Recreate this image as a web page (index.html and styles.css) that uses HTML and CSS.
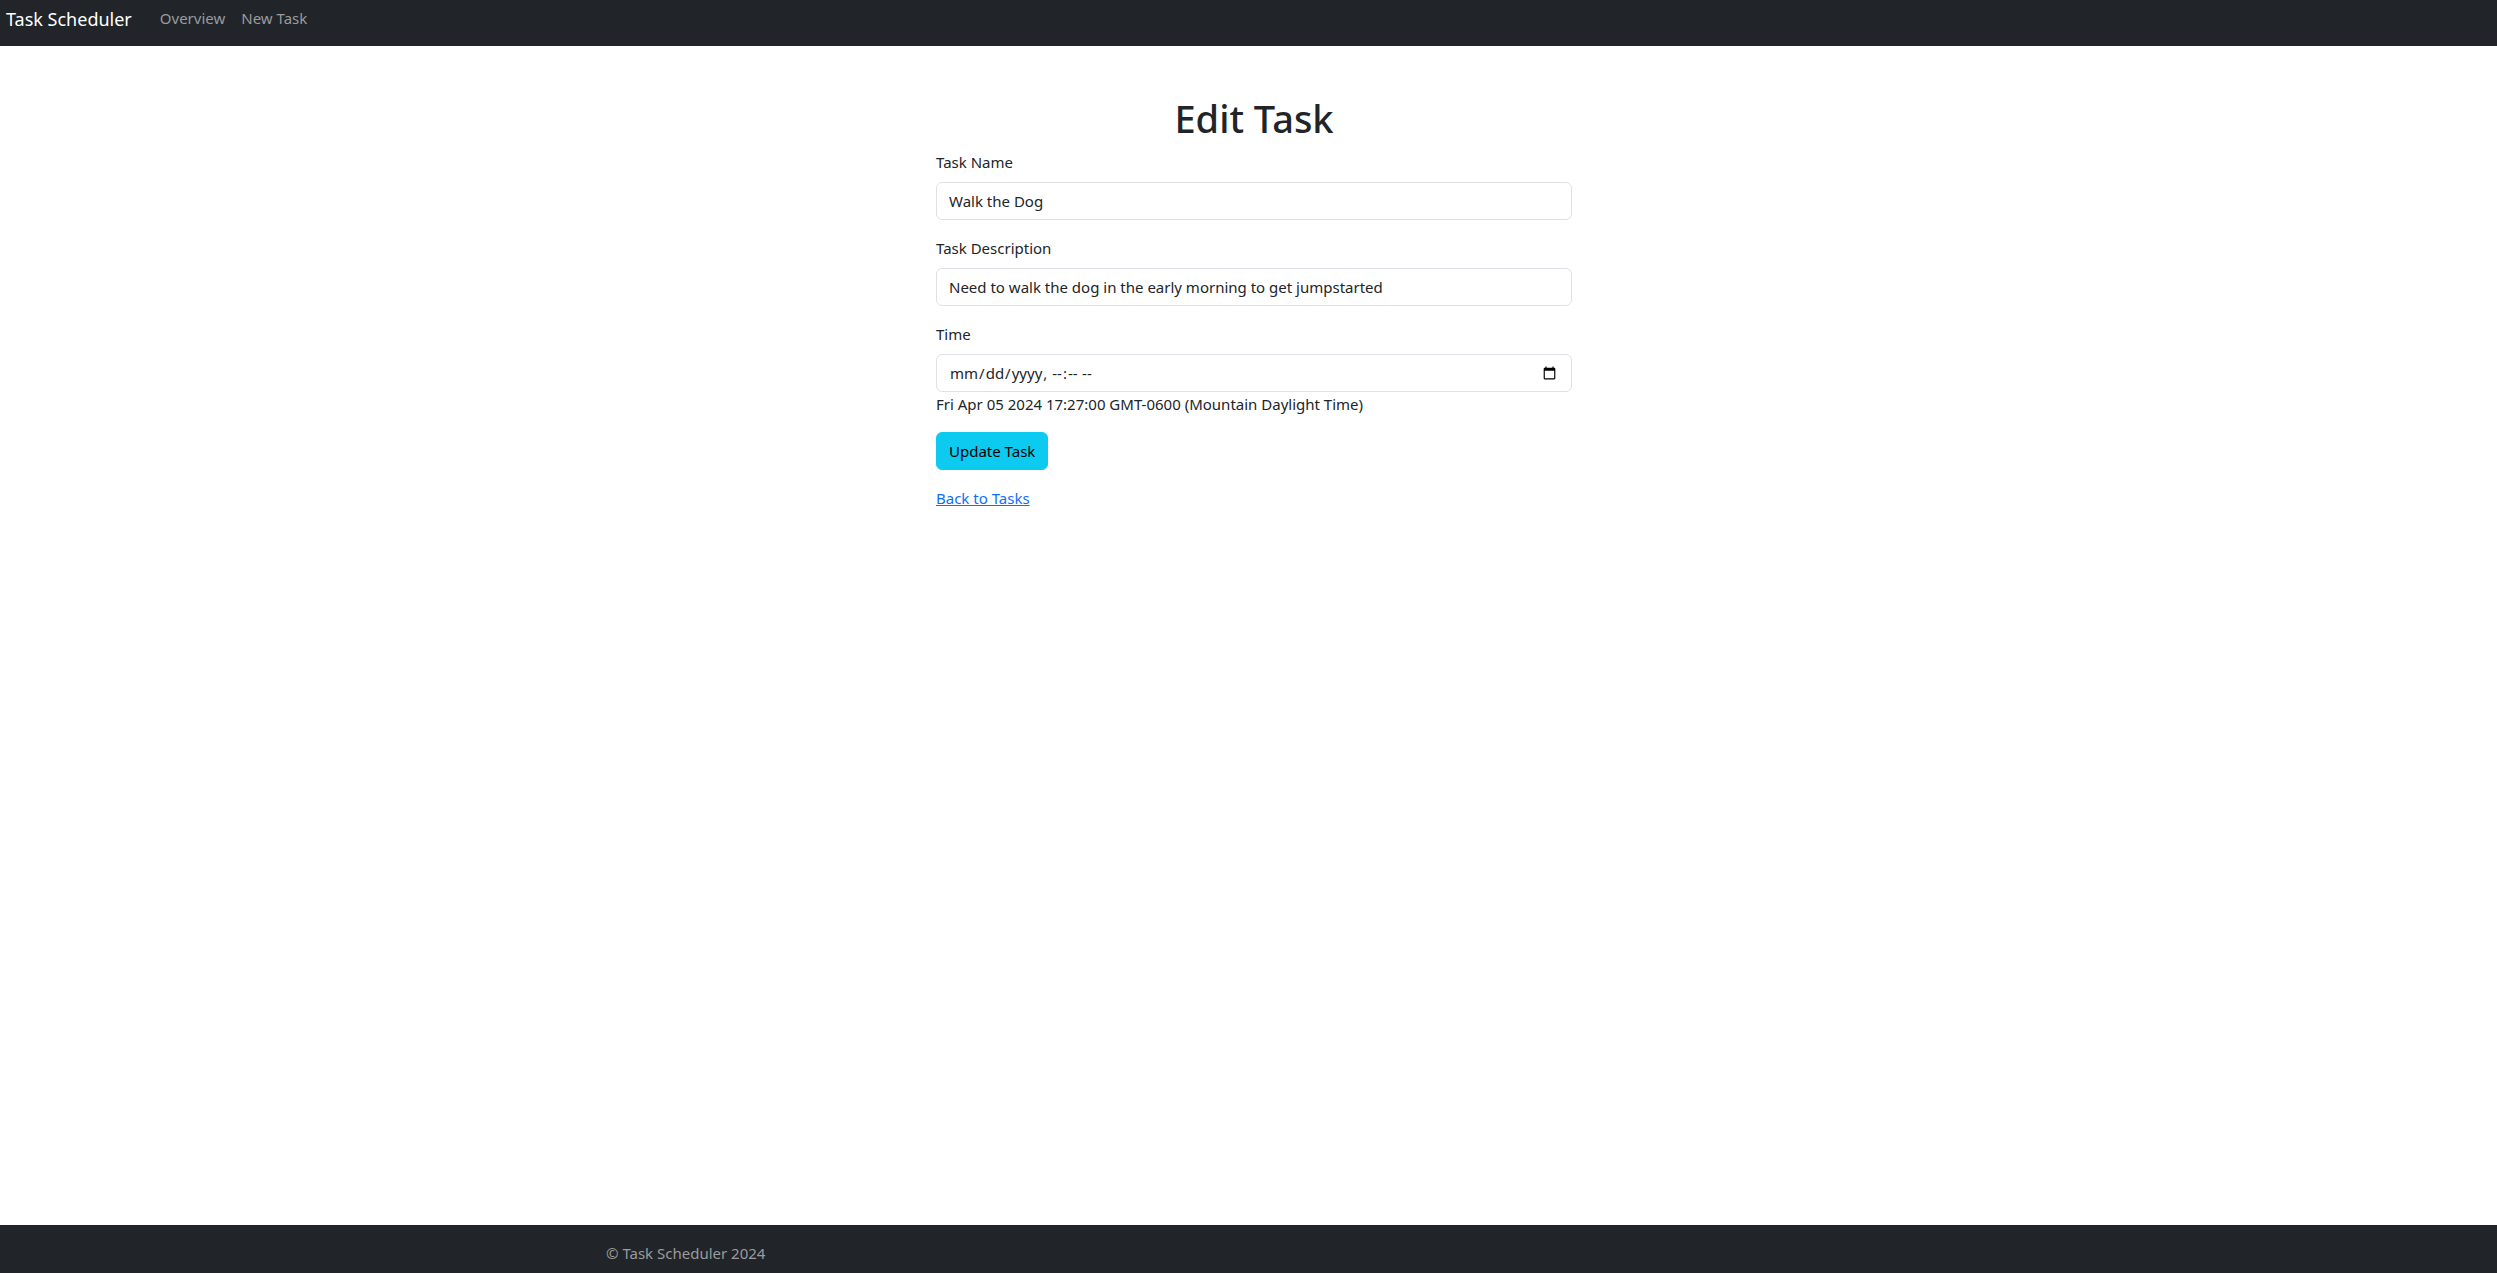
FILE: index.html
```html
<!DOCTYPE html>
<html lang="en">
<head>
<meta charset="utf-8">
<meta name="viewport" content="width=device-width, initial-scale=1">
<title>Edit Task</title>
<link rel="stylesheet" href="styles.css">
</head>
<body>
<header class="navbar">
  <a class="brand" href="#">Task Scheduler</a>
  <nav class="nav">
    <a class="nav-link" href="#">Overview</a>
    <a class="nav-link" href="#">New Task</a>
  </nav>
</header>
<main class="main">
  <div class="panel">
    <h1 class="title">Edit Task</h1>
    <form>
      <div class="field">
        <label class="label" for="name">Task Name</label>
        <input class="control" id="name" type="text" value="Walk the Dog">
      </div>
      <div class="field">
        <label class="label" for="description">Task Description</label>
        <input class="control" id="description" type="text" value="Need to walk the dog in the early morning to get jumpstarted">
      </div>
      <div class="field">
        <label class="label" for="time">Time</label>
        <input class="control" id="time" type="datetime-local">
        <div class="saved-time">Fri Apr 05 2024 17:27:00 GMT-0600 (Mountain Daylight Time)</div>
      </div>
      <button class="button" type="submit">Update Task</button>
    </form>
    <a class="back" href="#">Back to Tasks</a>
  </div>
</main>
<footer class="footer">
  <div class="container">© Task Scheduler 2024</div>
</footer>
</body>
</html>
```
FILE: styles.css
```css
*, *::before, *::after { box-sizing: border-box; }
body {
  display: flex;
  flex-direction: column;
  min-height: 100vh;
  margin: 0;
  font: 400 15px/24px "Segoe UI", "Noto Sans", "Open Sans", sans-serif;
  color: #212529;
  background: #fff;
}
.navbar {
  display: flex;
  align-items: flex-start;
  gap: 28px;
  height: 46px;
  padding: 6px;
  background: #212529;
}
.brand {
  font-size: 18px;
  line-height: 26px;
  color: #fff;
  text-decoration: none;
}
.nav { display: flex; gap: 16px; }
.nav-link { color: #999b9d; text-decoration: none; }
.main { flex: 1; padding: 48px 0 24px 11px; }
.panel { width: 100%; max-width: 636px; margin: 0 auto; }
.title {
  margin: 0 0 8px;
  font-size: 38px;
  line-height: 48px;
  font-weight: 500;
  text-align: center;
}
.field { margin-bottom: 16px; }
.label { display: block; margin-bottom: 8px; }
.control {
  display: block;
  width: 100%;
  height: 38px;
  padding: 6px 12px;
  border: 1px solid #dee2e6;
  border-radius: 6px;
  font: inherit;
  color: inherit;
  background: #fff;
}
.button {
  display: block;
  height: 38px;
  margin-bottom: 16px;
  padding: 6px 12px;
  border: 1px solid #0dcaf0;
  border-radius: 6px;
  font: inherit;
  color: #000;
  background: #0dcaf0;
}
.back { color: #0d6efd; }
.footer { padding: 16px 0 8px 11px; color: #999b9d; background: #212529; }
.container { max-width: 1320px; margin: 0 auto; padding: 0 12px; }
```
